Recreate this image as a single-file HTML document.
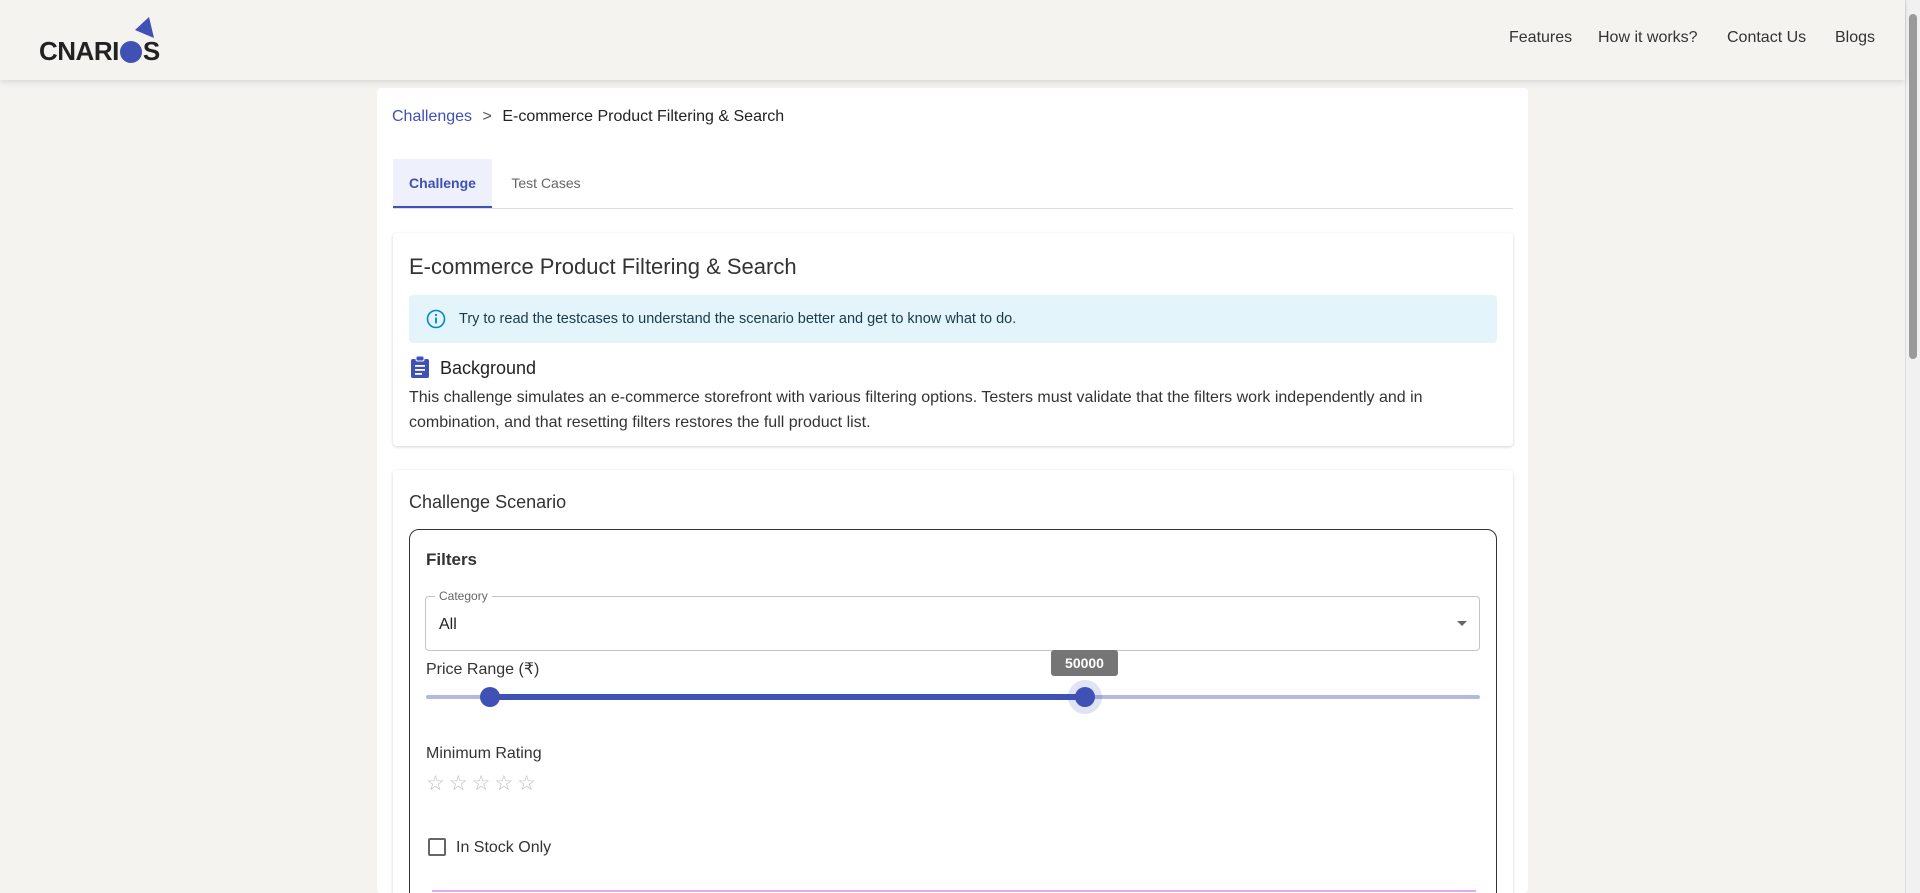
<!DOCTYPE html>
<html style="overflow:hidden;height:893px"><head><meta charset="utf-8"><style>
*{box-sizing:border-box;margin:0;padding:0}
body{width:1920px;height:893px;overflow:hidden;background:#f4f3f0;font-family:"Liberation Sans",sans-serif;color:#222;position:relative}
.hdr{position:absolute;left:0;top:0;width:1905px;height:80px;background:#f4f3f0;box-shadow:0 2px 6px rgba(0,0,0,.12);z-index:2}
.logo{position:absolute;left:39px;top:36px;font-weight:bold;font-size:26px;color:#222;letter-spacing:-0.5px}
.nav{position:absolute;top:29px;font-size:16px;color:#333}
.sb{position:absolute;right:0;top:0;width:15px;height:893px;background:#f1f1f1;border-left:1px solid #ddd}
.sb .th{position:absolute;left:3px;top:14px;width:8px;height:345px;background:#9a9a9a;border-radius:4px}
.main{position:absolute;left:377px;top:88px;width:1151px;height:805px;background:#fff;border-radius:4px;overflow:hidden}
.abs{position:absolute}
.card{position:absolute;left:16px;width:1120px;background:#fff;border-radius:4px;box-shadow:0 1px 3px rgba(0,0,0,.18)}
</style></head><body>
<div class="hdr">
 <div class="logo">CNARI<span style="display:inline-block;width:22px;height:22px;background:#3f51b5;border-radius:50%;vertical-align:-3px;margin:0 1px"></span>S</div>
 <svg class="abs" style="left:133px;top:16px" width="22" height="24"><polygon points="2,14 16,1 21,22" fill="#3f51b5"/></svg>
 <div class="nav" style="left:1509px">Features</div>
 <div class="nav" style="left:1598px">How it works?</div>
 <div class="nav" style="left:1727px">Contact Us</div>
 <div class="nav" style="left:1835px">Blogs</div>
</div>
<div class="sb"><div class="th"></div></div>
<div class="main">
 <div class="abs" style="left:15px;top:20px;font-size:16px"><span style="color:#3f51b5">Challenges</span> <span style="color:#555;margin:0 6px">&gt;</span> <span style="color:#222">E-commerce Product Filtering &amp; Search</span></div>
 <div class="abs" style="left:16px;top:71px;width:99px;height:49px;background:#eef0fb;border-bottom:2px solid #3f51b5;color:#3f51b5;font-size:14px;font-weight:bold;text-align:center;line-height:49px">Challenge</div>
 <div class="abs" style="left:115px;top:71px;width:108px;height:49px;color:#666;font-size:14px;text-align:center;line-height:49px">Test Cases</div>
 <div class="abs" style="left:16px;top:120px;width:1120px;height:1px;background:#ddd"></div>
 <div class="card" style="top:145px;height:213px">
  <div class="abs" style="left:16px;top:21px;font-size:22px;color:#333">E-commerce Product Filtering &amp; Search</div>
  <div class="abs" style="left:16px;top:62px;width:1088px;height:48px;background:#e3f4fa;border-radius:4px">
   <svg class="abs" style="left:17px;top:14px" width="20" height="20" viewBox="0 0 20 20"><circle cx="10" cy="10" r="8.5" fill="none" stroke="#0288d1" stroke-width="1.6"/><rect x="9.1" y="8.5" width="1.8" height="6" fill="#0288d1"/><circle cx="10" cy="6" r="1.1" fill="#0288d1"/></svg>
   <div class="abs" style="left:50px;top:16px;font-size:14.5px;color:#1a3a4a">Try to read the testcases to understand the scenario better and get to know what to do.</div>
  </div>
  <svg class="abs" style="left:17px;top:123px" width="20" height="22" viewBox="0 0 20 22"><rect x="1" y="3" width="18" height="19" rx="2" fill="#3f51b5"/><rect x="6" y="0" width="8" height="5" rx="1.5" fill="#3f51b5" stroke="#fff" stroke-width="1"/><rect x="5" y="9" width="10" height="1.8" fill="#fff"/><rect x="5" y="13" width="10" height="1.8" fill="#fff"/><rect x="5" y="17" width="7" height="1.8" fill="#fff"/></svg>
  <div class="abs" style="left:47px;top:125px;font-size:18px;color:#222">Background</div>
  <div class="abs" style="left:16px;top:152px;width:1090px;font-size:16px;line-height:25px;color:#333">This challenge simulates an e-commerce storefront with various filtering options. Testers must validate that the filters work independently and in combination, and that resetting filters restores the full product list.</div>
 </div>
 <div class="card" style="top:382px;height:440px">
  <div class="abs" style="left:16px;top:22px;font-size:18px;color:#333">Challenge Scenario</div>
  <div class="abs" style="left:16px;top:59px;width:1088px;height:400px;border:1px solid #333;border-radius:10px">
   <div class="abs" style="left:16px;top:20px;font-size:17px;font-weight:bold;color:#333">Filters</div>
   <div class="abs" style="left:15px;top:66px;width:1055px;height:55px;border:1px solid #c4c4c4;border-radius:4px">
    <div class="abs" style="left:9px;top:-8px;background:#fff;padding:0 4px;font-size:12px;color:#666">Category</div>
    <div class="abs" style="left:13px;top:19px;font-size:16px;color:#222">All</div>
    <svg class="abs" style="left:1031px;top:24px" width="10" height="6"><polygon points="0,0 10,0 5,5" fill="#666"/></svg>
   </div>
   <div class="abs" style="left:16px;top:129px;font-size:16px;color:#333">Price Range (₹)</div>
   <div class="abs" style="left:16px;top:165px;width:1054px;height:4px;background:#b3b9e3;border-radius:2px"></div>
   <div class="abs" style="left:80px;top:164px;width:595px;height:6px;background:#3f51b5"></div>
   <div class="abs" style="left:70px;top:157px;width:20px;height:20px;border-radius:50%;background:#3f51b5"></div>
   <div class="abs" style="left:658px;top:150px;width:34px;height:34px;border-radius:50%;background:rgba(63,81,181,.16)"></div>
   <div class="abs" style="left:665px;top:157px;width:20px;height:20px;border-radius:50%;background:#3f51b5"></div>
   <div class="abs" style="left:641px;top:120px;width:67px;height:26px;background:#757575;border-radius:3px;color:#fff;font-size:14px;font-weight:bold;text-align:center;line-height:26px">50000</div>
   <div class="abs" style="left:16px;top:215px;font-size:16px;color:#333">Minimum Rating</div>
   <div class="abs" style="left:16px;top:241px;font-size:21px;color:#bbb;letter-spacing:4px">☆☆☆☆☆</div>
   <div class="abs" style="left:18px;top:308px;width:18px;height:18px;border:2px solid #666;border-radius:2px"></div>
   <div class="abs" style="left:46px;top:309px;font-size:16px;color:#333">In Stock Only</div>
   <div class="abs" style="left:22px;top:360px;width:1044px;height:4px;border-top:2px solid #e8a8f0"></div>
  </div>
 </div>
</div>
</body></html>
